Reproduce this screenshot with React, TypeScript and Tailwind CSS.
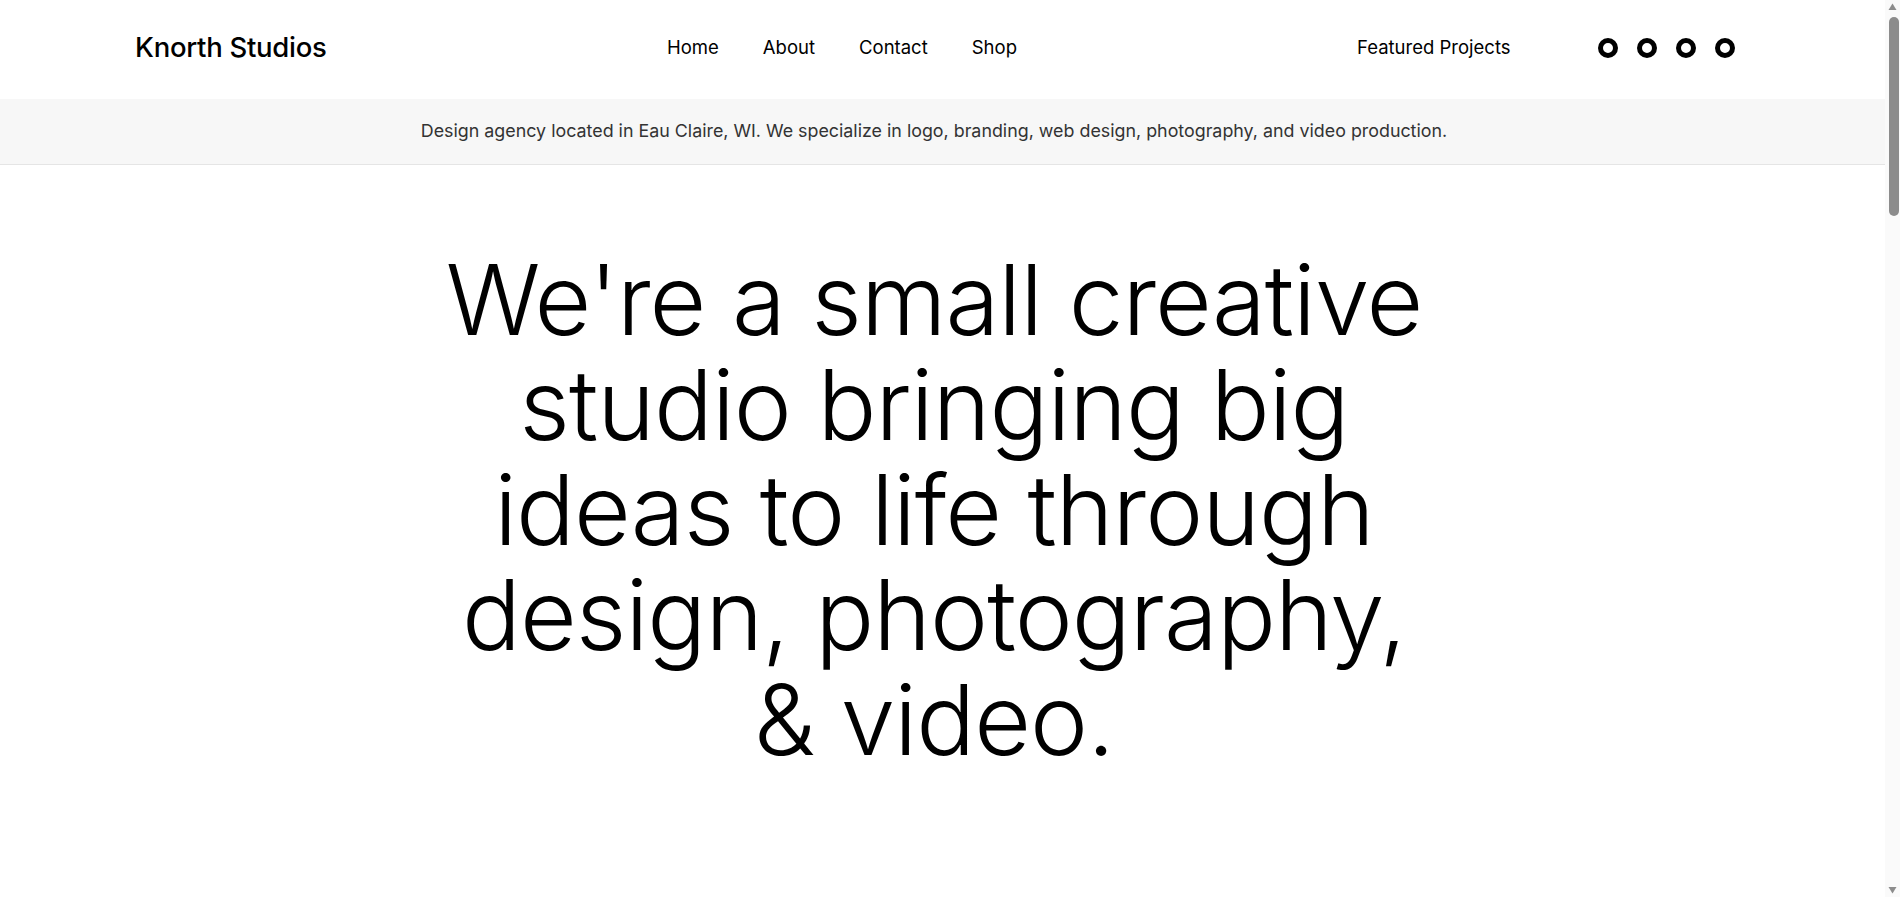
import React from "react";

const links = ["Home", "About", "Contact", "Shop"];
const projects = ["Brand Identity", "Web Design", "Photography", "Video Production"];

function FakeScrollbar() {
  // the reference was captured with the window's scrollbar showing
  return (
    <div className="fixed top-0 right-0 h-screen w-[15px] bg-[#fafafa] flex flex-col items-center">
      <svg width="15" height="15" viewBox="0 0 15 15" className="shrink-0">
        <path d="M3.5 10 L7.5 3.5 L11.5 10 Z" fill="#8c8c8c" />
      </svg>
      <div className="mt-[2px] h-[199px] w-[10px] ml-[3px] rounded-full bg-[#8c8c8c]" />
      <div className="flex-1" />
      <svg width="15" height="15" viewBox="0 0 15 15" className="shrink-0">
        <path d="M3.5 5 L7.5 11.5 L11.5 5 Z" fill="#8c8c8c" />
      </svg>
    </div>
  );
}

export default function App() {
  return (
    <div className="bg-white text-black font-['Inter','Noto_Sans',sans-serif]">
      <div className="mr-[15px]">
        {/* header */}
        <header className="h-[99px] pb-[4px] grid grid-cols-[532px_690px_241px_auto] items-center pl-[135px]">
          <a className="text-[27.5px] font-medium tracking-[-0.01em]">Knorth Studios</a>
          <nav className="flex items-center gap-[44px] text-[18.5px]">
            {links.map((l) => (
              <a key={l}>{l}</a>
            ))}
          </nav>
          <a className="text-[18.5px]">Featured Projects</a>
          <div className="flex items-center gap-[19px]">
            {[0, 1, 2, 3].map((i) => (
              <span key={i} className="w-[20px] h-[20px] rounded-full border-[5px] border-black" />
            ))}
          </div>
        </header>

        {/* tagline band */}
        <div className="h-[66px] pr-[17px] bg-[#f7f7f7] border-b border-[#e5e5e5] flex items-center justify-center">
          <p className="text-[17.85px] text-[#333]">
            Design agency located in Eau Claire, WI. We specialize in logo, branding, web design, photography, and video production.
          </p>
        </div>

        {/* hero */}
        <section className="flex justify-center pr-[17px] pt-[82px] pb-[300px]">
          <h1 className="max-w-[1000px] text-center text-[98px] leading-[105px] font-light tracking-[-0.01em]">
            We're a small creative studio bringing big ideas to life through design, photography, &amp; video.
          </h1>
        </section>

        {/* projects */}
        <section className="px-[135px] pb-[200px]">
          <h2 className="text-[40px] font-light mb-10">Featured Projects</h2>
          <div className="grid grid-cols-2 gap-10">
            {projects.map((p) => (
              <div key={p} className="flex flex-col gap-4">
                <div className="h-[900px] bg-[#eeeeee]" />
                <span className="text-[18px]">{p}</span>
              </div>
            ))}
          </div>
        </section>
      </div>
      <FakeScrollbar />
    </div>
  );
}
